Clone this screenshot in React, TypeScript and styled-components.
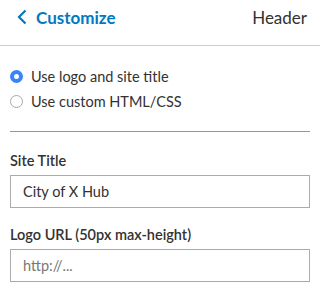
import React from 'react';
import styled, { createGlobalStyle } from 'styled-components';

const GlobalStyle = createGlobalStyle`
    html, body {
        margin: 0;
        padding: 0;
        background: #fff;
    }
    body {
        font-family: Lato, 'Noto Sans', sans-serif;
        color: #323232;
    }
`;

const Panel = styled.div`
    width: 320px;
    height: 299px;
    overflow: hidden;
    background: #fff;
`;

const TopBar = styled.div`
    height: 45px;
    display: flex;
    align-items: center;
    justify-content: space-between;
    padding: 0 13px 0 17px;
    border-bottom: 1px solid #cccccc;
    box-sizing: content-box;
`;

const Back = styled.a`
    display: flex;
    align-items: center;
    gap: 9px;
    color: #0079c1;
    font-size: 17px;
    font-weight: 700;
    text-decoration: none;
    margin-top: -11px;
`;

const PageName = styled.span`
    font-size: 17px;
    color: #323232;
    margin-top: -11px;
`;

const Body = styled.div`
    padding: 21px 10px 0;
`;

const RadioGroup = styled.div`
    display: flex;
    flex-direction: column;
    gap: 6px;
`;

const RadioRow = styled.label`
    display: flex;
    align-items: center;
    gap: 8px;
    height: 19px;
    font-size: 14.5px;
    color: #323232;
`;

const RadioDot = styled.span<{ $checked?: boolean }>`
    width: 13px;
    height: 13px;
    border-radius: 50%;
    box-sizing: border-box;
    flex: 0 0 auto;
    border: ${(p) => (p.$checked ? '4px solid #3a84f5' : '1px solid #a8a8a8')};
    background: #fff;
`;

const Divider = styled.hr`
    border: 0;
    border-top: 1px solid #959595;
    margin: 20px 0 0;
`;

const Field = styled.div`
    display: flex;
    flex-direction: column;
`;

const Label = styled.div`
    font-size: 14.5px;
    font-weight: 600;
    color: #323232;
    height: 20px;
    line-height: 20px;
    margin-bottom: 4px;
`;

const TextBox = styled.input`
    box-sizing: border-box;
    width: 100%;
    height: 33px;
    border: 1px solid #ababab;
    padding: 0 12px;
    font-family: Lato, 'Noto Sans', sans-serif;
    font-size: 14.5px;
    color: #323232;
    outline: none;
    &::placeholder {
        color: #777;
    }
`;

const Fields = styled.div`
    display: flex;
    flex-direction: column;
    gap: 17px;
    margin-top: 19px;
`;

function App() {
    const [mode, setMode] = React.useState('logo');
    const [title, setTitle] = React.useState('City of X Hub');

    return (
        <Panel>
            <GlobalStyle />
            <TopBar>
                <Back href="#">
                    <svg width="10" height="16" viewBox="0 0 10 16">
                        <path d="M8.5 1.5 L2 8 L8.5 14.5" fill="none" stroke="#0079c1" strokeWidth="2.2" />
                    </svg>
                    Customize
                </Back>
                <PageName>Header</PageName>
            </TopBar>
            <Body>
                <RadioGroup>
                    <RadioRow onClick={() => setMode('logo')}>
                        <RadioDot $checked={mode === 'logo'} />
                        Use logo and site title
                    </RadioRow>
                    <RadioRow onClick={() => setMode('custom')}>
                        <RadioDot $checked={mode === 'custom'} />
                        Use custom HTML/CSS
                    </RadioRow>
                </RadioGroup>
                <Divider />
                <Fields>
                    <Field>
                        <Label>Site Title</Label>
                        <TextBox value={title} onChange={(e) => setTitle(e.target.value)} />
                    </Field>
                    <Field>
                        <Label>Logo URL (50px max-height)</Label>
                        <TextBox placeholder="http://..." />
                    </Field>
                </Fields>
            </Body>
        </Panel>
    );
}

export default App;
